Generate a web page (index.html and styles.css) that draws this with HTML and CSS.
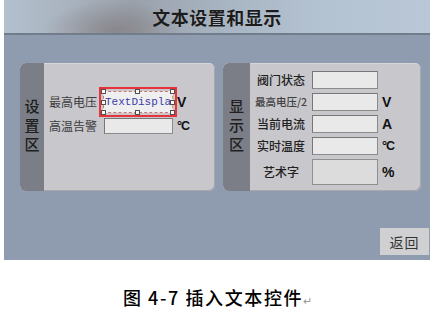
FILE: index.html
```html
<!DOCTYPE html>
<html lang="zh">
<head>
<meta charset="utf-8">
<title>文本设置和显示</title>
<link rel="stylesheet" href="styles.css">
</head>
<body>
<div class="screen">
  <div class="header"><h1>文本设置和显示</h1></div>
  <div class="panels">
    <section class="panel panel-left">
      <div class="strip strip-left"><span>设</span><span>置</span><span>区</span></div>
      <div class="fields fields-left">
        <span class="label">最高电压</span>
        <div class="selected">
          <div class="input textdisplay">TextDispla</div>
          <i class="h h-tl"></i><i class="h h-tm"></i><i class="h h-tr"></i>
          <i class="h h-ml"></i><i class="h h-mr"></i>
          <i class="h h-bl"></i><i class="h h-bm"></i><i class="h h-br"></i>
        </div>
        <span class="unit">V</span>
        <span class="label">高温告警</span>
        <div class="input"></div>
        <span class="unit unit-c">°C</span>
      </div>
    </section>
    <section class="panel panel-right">
      <div class="strip strip-right"><span>显</span><span>示</span><span>区</span></div>
      <div class="fields fields-right">
        <span class="label label-dark">阀门状态</span>
        <div class="input"></div>
        <span class="unit"></span>
        <span class="label label-small">最高电压/2</span>
        <div class="input"></div>
        <span class="unit">V</span>
        <span class="label label-dark">当前电流</span>
        <div class="input"></div>
        <span class="unit">A</span>
        <span class="label label-dark">实时温度</span>
        <div class="input"></div>
        <span class="unit unit-c">°C</span>
        <span class="label label-dark">艺术字</span>
        <div class="input input-art"></div>
        <span class="unit">%</span>
      </div>
    </section>
  </div>
  <div class="footer"><button class="btn-back" type="button">返回</button></div>
</div>
<p class="caption">图 4-7 插入文本控件<span class="ret">↵</span></p>
</body>
</html>
```

FILE: styles.css
```css
html, body {
  margin: 0;
  padding: 0;
  background: #ffffff;
}

body {
  width: 435px;
  height: 324px;
  overflow: hidden;
  font-family: "Noto Sans CJK SC", "Liberation Sans", sans-serif;
}

.screen {
  width: 426px;
  height: 260px;
  margin-left: 4px;
  background: #8f9cb0;
  display: flex;
  flex-direction: column;
}

.header {
  height: 33px;
  border-bottom: 2px solid #727d8c;
  display: flex;
  align-items: center;
  justify-content: center;
  background:
    radial-gradient(ellipse 70px 30px at 110px 30px, rgba(120, 110, 110, 0.55), rgba(120, 110, 110, 0) 100%),
    linear-gradient(90deg, #b3c0ce 0%, #a9b3bf 15%, #9aa1ab 30%, #a7b3c1 50%, #b4c3d2 75%, #b9c7d6 100%);
}

.header h1 {
  margin: 0;
  font-size: 18px;
  font-weight: bold;
  color: #1c1c1c;
  letter-spacing: 0.5px;
  text-shadow: 0 0 1px rgba(255, 255, 255, 0.4);
}

.panels {
  display: flex;
  gap: 8px;
  padding: 28px 0 0 16px;
}

.panel {
  height: 128px;
  background: #c8c7cc;
  border-radius: 6px;
  display: flex;
  overflow: hidden;
  box-shadow: inset -1px -1px 0 #a9a8ae, inset 1px 1px 0 #d6d5da;
}

.panel-left { width: 195px; }
.panel-right { width: 198px; }

.strip {
  background: #7b7e87;
  display: flex;
  flex-direction: column;
  align-items: center;
  justify-content: center;
  font-size: 15px;
  font-weight: 500;
  line-height: 19px;
  color: #1f1f1f;
  padding-bottom: 6px;
  box-sizing: border-box;
}

.strip-left { width: 24px; }
.strip-right { width: 27px; }

.fields {
  display: grid;
  align-items: center;
}

.fields-left {
  grid-template-columns: 51px 69px 28px;
  grid-template-rows: 22px 16px;
  column-gap: 4px;
  row-gap: 5px;
  padding: 28px 0 0 5px;
  align-content: start;
}

.fields-right {
  grid-template-columns: 56px 66px 20px;
  grid-template-rows: 18px 18px 18px 18px 26px;
  column-gap: 3px;
  row-gap: 4px;
  padding: 8px 0 0 3px;
  align-content: start;
}

.fields-right .unit { margin-left: 1px; }

.label {
  font-size: 12px;
  color: #3c3c3c;
  white-space: nowrap;
  line-height: 16px;
}

.fields-right .label {
  justify-self: center;
}

.label-dark {
  color: #222;
  font-weight: 500;
}

.label-small {
  font-size: 10.5px;
  color: #404040;
  font-weight: 500;
}

.input {
  height: 100%;
  box-sizing: border-box;
  background: #e9e9e9;
  border: 1px solid #8b8b8b;
  border-top-color: #777;
  border-left-color: #777;
}

.input-art {
  background: #dcdcdc;
  border-color: #8f8f8f;
}

.unit {
  font-family: "Liberation Sans", Arial, sans-serif;
  font-weight: bold;
  font-size: 14px;
  color: #111;
  line-height: 16px;
}

.unit-c {
  font-size: 12.5px;
  letter-spacing: -1px;
}

.selected {
  position: relative;
  height: 22px;
  margin-left: -1px;
  outline: 2px solid #e8333a;
  outline-offset: 2px;
}

.textdisplay {
  height: 22px;
  background: #efefef;
  border: 1px dashed #c87474;
  border-right-color: #d99a4a;
  font-family: "Liberation Mono", "Courier New", monospace;
  font-size: 11px;
  line-height: 20px;
  color: #3d3dab;
  padding-left: 1px;
  overflow: hidden;
  white-space: nowrap;
}

.h {
  position: absolute;
  width: 3px;
  height: 3px;
  background: #fafafa;
  border: 1px solid #505050;
}

.h-tl { left: -2px; top: -2px; }
.h-tm { left: 32px; top: -2px; }
.h-tr { right: -2px; top: -2px; }
.h-ml { left: -2px; top: 9px; }
.h-mr { right: -2px; top: 9px; }
.h-bl { left: -2px; bottom: -2px; }
.h-bm { left: 32px; bottom: -2px; }
.h-br { right: -2px; bottom: -2px; }

.footer {
  margin-top: auto;
  display: flex;
  justify-content: flex-end;
  padding: 0 1px 5px 0;
}

.btn-back {
  width: 49px;
  height: 27px;
  margin: 0;
  padding: 0;
  border: none;
  background: #d0d0d3;
  font-family: "Noto Sans CJK SC", sans-serif;
  font-size: 14px;
  color: #333;
  letter-spacing: 1px;
}

.caption {
  margin: 25px 0 0 0;
  text-align: center;
  font-size: 18px;
  font-weight: 500;
  letter-spacing: 1.6px;
  line-height: 24px;
  color: #000;
}

.ret {
  font-size: 11px;
  color: #9a9a9a;
  margin-left: 0;
  letter-spacing: 0;
}
```
